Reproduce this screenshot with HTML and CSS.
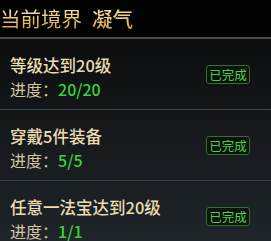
FILE: index.html
```html
<!DOCTYPE html>
<html lang="zh">
<head>
<meta charset="utf-8">
<link rel="stylesheet" href="styles.css">
</head>
<body>
<div class="panel">
  <div class="header">
    <span class="h-label">当前境界</span><span class="h-value">凝气</span>
  </div>
  <div class="list">
    <div class="row">
      <div class="info">
        <div class="title">等级达到20级</div>
        <div class="progress">进度：<span class="val">20/20</span></div>
      </div>
      <div class="badge">已完成</div>
    </div>
    <div class="row">
      <div class="info">
        <div class="title">穿戴5件装备</div>
        <div class="progress">进度：<span class="val">5/5</span></div>
      </div>
      <div class="badge">已完成</div>
    </div>
    <div class="row">
      <div class="info">
        <div class="title">任意一法宝达到20级</div>
        <div class="progress">进度：<span class="val">1/1</span></div>
      </div>
      <div class="badge">已完成</div>
    </div>
  </div>
</div>
</body>
</html>
```
FILE: styles.css
```css
html, body {
  margin: 0;
  padding: 0;
  background: #000;
}
body {
  width: 271px;
  height: 241px;
  overflow: hidden;
  font-family: "Noto Sans CJK SC", "Noto Sans", sans-serif;
}
.panel {
  width: 271px;
  height: 241px;
  display: flex;
  flex-direction: column;
}
.header {
  height: 39px;
  flex: none;
  box-sizing: border-box;
  padding: 5px 0 0 0;
  border-bottom: 2px solid #4a4a4a;
  background: #030303;
  font-size: 20.5px;
  line-height: 27px;
  white-space: nowrap;
}
.h-label, .h-value {
  background: linear-gradient(180deg, #fbf1c0 0%, #efcc7a 50%, #cf9032 100%);
  -webkit-background-clip: text;
  background-clip: text;
  color: transparent;
}
.h-value {
  margin-left: 10px;
  font-weight: 500;
}
.list {
  flex: 1;
  background: linear-gradient(180deg, #0b0c0d 0%, #15181b 40%, #20262a 100%);
}
.row {
  height: 71px;
  box-sizing: border-box;
  border-bottom: 1px solid #3c4144;
  display: flex;
  align-items: center;
  padding: 0 21px 0 10px;
}
.info {
  flex: 1;
  display: flex;
  flex-direction: column;
  gap: 3px;
  padding-top: 5px;
}
.title {
  font-size: 16.5px;
  line-height: 21px;
  color: #ecdcb2;
  font-weight: 500;
}
.progress {
  font-size: 16px;
  line-height: 20px;
  color: #d2c6a4;
}
.val {
  color: #3ad23a;
  font-weight: 500;
}
.badge {
  width: 44px;
  height: 19px;
  box-sizing: border-box;
  border: 1px solid #356e35;
  border-radius: 3px;
  background: #0b130b;
  color: #4fcf4f;
  font-size: 12.5px;
  line-height: 17px;
  text-align: center;
  margin-top: 1px;
}
```
